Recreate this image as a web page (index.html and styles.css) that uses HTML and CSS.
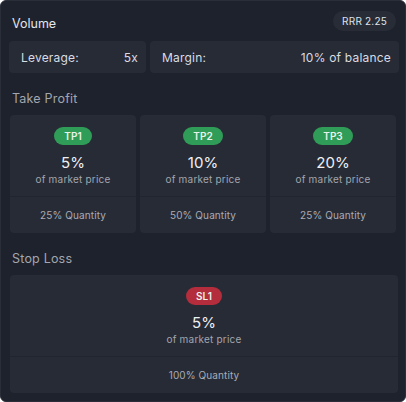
FILE: index.html
```html
<!DOCTYPE html>
<html>
<head>
    <title>Order Targets</title>
    <link rel="stylesheet" href="styles.css">
</head>
<body>
    <div class="panel">
        <div class="head">
            <span class="title">Volume</span>
            <span class="rrr">RRR 2.25</span>
        </div>
        <div class="volume-row">
            <div class="field lev">
                <span>Leverage:</span>
                <span>5x</span>
            </div>
            <div class="field margin">
                <span>Margin:</span>
                <span>10% of balance</span>
            </div>
        </div>

        <div class="section-title">Take Profit</div>
        <div class="tp-row">
            <div class="target">
                <div class="target-top">
                    <span class="tag tag-tp">TP1</span>
                    <div class="pct">5%</div>
                    <div class="sub">of market price</div>
                </div>
                <div class="qty">25% Quantity</div>
            </div>
            <div class="target">
                <div class="target-top">
                    <span class="tag tag-tp">TP2</span>
                    <div class="pct">10%</div>
                    <div class="sub">of market price</div>
                </div>
                <div class="qty">50% Quantity</div>
            </div>
            <div class="target">
                <div class="target-top">
                    <span class="tag tag-tp">TP3</span>
                    <div class="pct">20%</div>
                    <div class="sub">of market price</div>
                </div>
                <div class="qty">25% Quantity</div>
            </div>
        </div>

        <div class="section-title">Stop Loss</div>
        <div class="sl-row">
            <div class="target">
                <div class="target-top">
                    <span class="tag tag-sl">SL1</span>
                    <div class="pct">5%</div>
                    <div class="sub">of market price</div>
                </div>
                <div class="qty">100% Quantity</div>
            </div>
        </div>
    </div>
</body>
</html>
```

FILE: styles.css
```css
body {
    margin: 0;
    background: #ffffff;
    font-family: Inter, "Noto Sans", sans-serif;
}
.panel {
    width: 406px;
    height: 402px;
    box-sizing: border-box;
    background: #1e222c;
    border: 1px solid #2a2e39;
    border-radius: 6px;
    padding: 0 6px 0 8px;
}
.head {
    display: flex;
    justify-content: space-between;
    align-items: flex-start;
    height: 40px;
    padding: 0 3px;
}
.title {
    color: #e3e5ea;
    font-size: 12.5px;
    line-height: 16px;
    margin-top: 15px;
}
.rrr {
    background: #282c37;
    color: #dfe2e8;
    font-size: 10px;
    height: 20px;
    line-height: 20px;
    margin-top: 10px;
    padding: 0 9px;
    border-radius: 10px;
    letter-spacing: 0.2px;
}
.volume-row {
    display: flex;
    gap: 4px;
}
.field {
    display: flex;
    justify-content: space-between;
    align-items: center;
    background: #272b36;
    border-radius: 4px;
    height: 32px;
    padding: 0 8px 0 12px;
    color: #d9dce3;
    font-size: 12px;
    letter-spacing: 0.2px;
}
.lev {
    width: 137px;
    box-sizing: border-box;
}
.margin {
    flex: 1;
}
.section-title {
    color: #a3a6ae;
    font-size: 12.5px;
    line-height: 16px;
    padding: 18px 0 0 3px;
    height: 24px;
    letter-spacing: 0.2px;
}
.tp-row {
    display: grid;
    grid-template-columns: repeat(3, 1fr);
    gap: 4px;
    margin: 0 3px 0 1px;
}
.sl-row {
    margin: 0 1px 0 1px;
}
.target {
    background: #272b36;
    border-radius: 4px;
    text-align: center;
    height: 118px;
    display: flex;
    flex-direction: column;
}
.target-top {
    height: 82px;
    box-sizing: border-box;
    padding-top: 12px;
    border-bottom: 1px solid #21252f;
}
.tag {
    display: block;
    width: fit-content;
    margin: 0 auto;
    height: 18px;
    line-height: 18px;
    padding: 0 10px;
    border-radius: 9px;
    color: #e8f3ec;
    font-size: 10px;
    font-weight: 600;
}
.tag-tp {
    background: #2f9d57;
}
.tag-sl {
    background: #b32d3c;
}
.pct {
    color: #eef0f3;
    font-size: 15px;
    margin-top: 9px;
    line-height: 18px;
}
.sub {
    color: #a3a6ae;
    font-size: 10px;
    line-height: 14px;
    letter-spacing: 0.2px;
}
.qty {
    flex: 1;
    display: flex;
    align-items: center;
    justify-content: center;
    color: #a9acb4;
    font-size: 10px;
    letter-spacing: 0.1px;
}
```
